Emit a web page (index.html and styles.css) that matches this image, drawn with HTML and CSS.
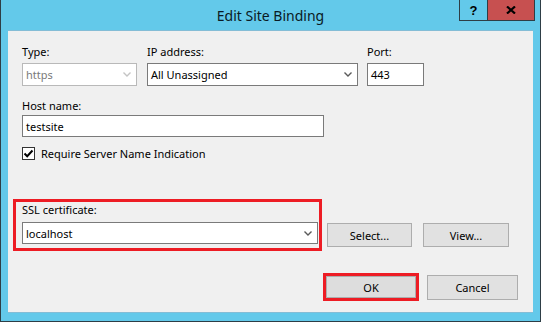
FILE: index.html
```html
<!DOCTYPE html>
<html lang="en">
<head>
    <meta charset="UTF-8">
    <title>Edit Site Binding</title>
    <link rel="stylesheet" href="styles.css">
</head>
<body>
    <div class="window">
        <div class="titlebar">
            <div class="title">Edit Site Binding</div>
            <div class="caption">
                <div class="cap-btn help">?</div>
                <div class="cap-btn close">
                    <svg width="10" height="8" viewBox="0 0 10 8"><path d="M1 0.5 L9 7.5 M9 0.5 L1 7.5" stroke="#000" stroke-width="2.2" fill="none"/></svg>
                </div>
            </div>
        </div>

        <div class="client">
            <!-- Type / IP / Port -->
            <div class="row-top">
                <div class="field f-type">
                    <label>Type:</label>
                    <div class="combo disabled">
                        <span>https</span>
                        <svg class="chev" width="8" height="5" viewBox="0 0 8 5"><path d="M0.5 0.5 L4 4 L7.5 0.5" stroke="#c4c4c4" stroke-width="1.4" fill="none"/></svg>
                    </div>
                </div>
                <div class="field f-ip">
                    <label>IP address:</label>
                    <div class="combo">
                        <span>All Unassigned</span>
                        <svg class="chev" width="8" height="5" viewBox="0 0 8 5"><path d="M0.5 0.5 L4 4 L7.5 0.5" stroke="#5a5a5a" stroke-width="1.4" fill="none"/></svg>
                    </div>
                </div>
                <div class="field f-port">
                    <label>Port:</label>
                    <div class="textbox">443</div>
                </div>
            </div>

            <div class="field f-host">
                <label>Host name:</label>
                <div class="textbox">testsite</div>
            </div>

            <div class="check">
                <span class="box">
                    <svg width="11" height="11" viewBox="0 0 11 11"><path d="M1.5 5.5 L4.2 8.2 L9.5 2.5" stroke="#000" stroke-width="2" fill="none"/></svg>
                </span>
                <span>Require Server Name Indication</span>
            </div>

            <!-- SSL certificate -->
            <div class="ssl-row">
                <div class="ssl-group">
                    <label>SSL certificate:</label>
                    <div class="combo">
                        <span>localhost</span>
                        <svg class="chev" width="8" height="5" viewBox="0 0 8 5"><path d="M0.5 0.5 L4 4 L7.5 0.5" stroke="#5a5a5a" stroke-width="1.4" fill="none"/></svg>
                    </div>
                </div>
                <button class="btn btn-select">Select...</button>
                <button class="btn btn-view">View...</button>
            </div>

            <div class="footer">
                <div class="ok-wrap"><button class="btn btn-ok">OK</button></div>
                <button class="btn btn-cancel">Cancel</button>
            </div>
        </div>
    </div>
</body>
</html>
```

FILE: styles.css
```css
/* General */
body {
    margin: 0;
    font-family: "Noto Sans", "Open Sans", sans-serif;
    font-size: 11px;
    color: #000;
}

.window {
    width: 541px;
    height: 322px;
    box-sizing: border-box;
    display: flex;
    flex-direction: column;
    background: #63c9ea;
    border: 1px solid #2e3e46;
    border-top: none;
}

/* Title bar */
.titlebar {
    height: 30px;
    display: grid;
    grid-template-columns: 1fr auto 1fr;
    align-items: start;
    padding: 0 5px;
}

.title {
    grid-column: 2;
    font-size: 14px;
    line-height: 31px;
    color: #0a1a24;
}

.caption {
    grid-column: 3;
    justify-self: end;
    display: flex;
}

.cap-btn {
    height: 21px;
    box-sizing: border-box;
    display: flex;
    align-items: center;
    justify-content: center;
    border: 1px solid #2e3e46;
    border-top: none;
}

.help {
    width: 29px;
    font-family: "Liberation Sans", sans-serif;
    font-weight: bold;
    font-size: 13px;
}

.close {
    width: 47px;
    border-left: none;
    background: #c75050;
}

/* Client area */
.client {
    flex: 1;
    margin: 0 7px 8px;
    box-sizing: border-box;
    background: #f0f0f0;
    border-top: 1px solid #84bdd6;
    border-bottom: 1px solid #84bdd6;
    padding: 13px 15px 0 14px;
}

label {
    display: block;
    line-height: 16px;
}

.combo,
.textbox {
    box-sizing: border-box;
    height: 23px;
    display: flex;
    align-items: center;
    background: #fff;
    border: 1px solid #7a7a7a;
    padding: 0 5px 0 3px;
}

.combo {
    justify-content: space-between;
}

.combo.disabled {
    border-color: #b9b9b9;
    color: #7a7a7a;
}

.row-top {
    display: flex;
    gap: 9px;
}

.row-top label {
    margin-bottom: 3px;
}

.f-type {
    width: 116px;
}

.f-type .combo {
    width: 115px;
}

.f-ip {
    width: 211px;
}

.f-port {
    width: 57px;
}

.f-host {
    margin-top: 12px;
    width: 302px;
}

.f-host label {
    margin-bottom: 1px;
}

.f-host .textbox {
    height: 22px;
}

.check {
    margin-top: 10px;
    display: flex;
    align-items: center;
    gap: 6px;
    line-height: 13px;
}

.check .box {
    width: 13px;
    height: 13px;
    box-sizing: border-box;
    border: 1px solid #333;
    background: #fff;
    display: flex;
    align-items: center;
    justify-content: center;
}

/* SSL group */
.ssl-row {
    margin-top: 39px;
    display: flex;
    align-items: flex-start;
}

.ssl-group {
    margin-left: -9px;
    width: 309px;
    box-sizing: border-box;
    border: 3px solid #ed1c24;
    padding: 0 1px 4px 6px;
}

.ssl-group label {
    margin-bottom: 4px;
}

.ssl-group .combo {
    height: 22px;
}

/* Buttons */
.btn {
    box-sizing: border-box;
    height: 24px;
    padding: 0;
    background: #e1e1e1;
    border: 1px solid #adadad;
    font-family: inherit;
    font-size: 11px;
    color: #000;
}

.btn-select {
    width: 85px;
    margin: 24px 0 0 5px;
}

.btn-view {
    width: 86px;
    margin: 24px 0 0 11px;
}

.footer {
    margin-top: 22px;
    display: flex;
    justify-content: flex-end;
    align-items: center;
    gap: 8px;
}

.ok-wrap {
    border: 3px solid #ed1c24;
    display: flex;
}

.btn-ok {
    width: 90px;
    height: 22px;
    background: #dddddd;
}

.btn-cancel {
    width: 91px;
    height: 25px;
}
```
